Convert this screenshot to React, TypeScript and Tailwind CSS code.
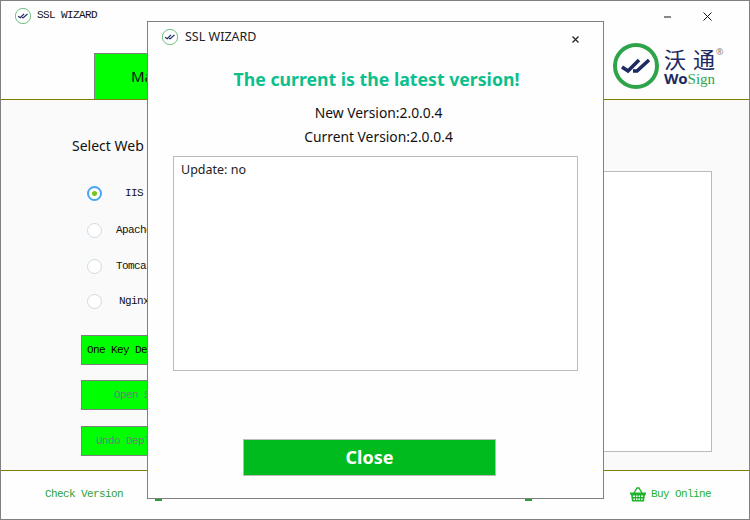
const mono = "font-['Liberation_Mono',monospace] text-[11px] tracking-[-0.6px]"
const sans = "font-['Noto_Sans',sans-serif]"

const RingLogo = ({ size, ring = 4 }: { size: number; ring?: number }) => (
  <svg width={size} height={size} viewBox="0 0 46 46" className="shrink-0">
    <circle cx="23" cy="23" r={23 - ring / 2} fill="#fff" stroke="#2ea44a" strokeWidth={ring} />
    <path d="M9 24l6 4 11-11M20 28h4l12-11" fill="none" stroke="#1d2a63" strokeWidth="3.600" />
  </svg>
)

const Basket = () => (
  <svg width="16" height="16" viewBox="0 0 16 16" className="shrink-0">
    <path d="M4 7l3-5h2l3 5" fill="none" stroke="#1fb42c" strokeWidth="1.4" />
    <path d="M0 6.500h16v2h-1l-1 7H2l-1-7H0z" fill="#1fb42c" />
    <path d="M3 9.500h2v1.500H3zM6 9.500h1.500v1.500H6zM8.500 9.500H10v1.500H8.500zM11 9.500h2v1.500h-2zM3.500 12.500H5V14H3.500zM6 12.500h1.500V14H6zM8.500 12.500H10V14H8.500zM11 12.500h1.500V14H11z" fill="#fff" />
  </svg>
)

const radios = [
  { label: 'IIS', checked: true, mt: 'mt-0' },
  { label: 'Apache', checked: false, mt: 'mt-[22px]' },
  { label: 'Tomcat', checked: false, mt: 'mt-[21px]' },
  { label: 'Nginx', checked: false, mt: 'mt-[20px]' },
]

const buttons = [
  { label: 'One Key Deployment', color: 'text-black', mt: 'mt-0' },
  { label: 'Open Site', color: 'text-[#777777]', mt: 'mt-[15px]' },
  { label: 'Undo Deployment', color: 'text-[#777777]', mt: 'mt-[16px]' },
]

const UpdateDialog = () => (
  <div className={`absolute left-[146px] top-[20px] w-[457px] h-[478px] border border-[#808080] bg-[#fefefe] flex flex-col ${sans}`}>
    <div className="flex items-center h-[29px] pl-[14px] pr-[24px]">
      <RingLogo size={16} ring={2} />
      <span className="ml-[7px] mt-[2px] text-[12.5px] text-[#222]">SSL WIZARD</span>
      <svg width="7" height="7" viewBox="0 0 7 7" className="ml-auto mt-[5px]">
        <path d="M0.500 0.500l6 6M6.500 0.500l-6 6" stroke="#222" strokeWidth="1.200" />
      </svg>
    </div>
    <h1 className="mt-[15px] pl-[2px] text-center text-[17.7px] leading-[26px] font-bold text-[#0dbf8c]">
      The current is the latest version!
    </h1>
    <p className="mt-[9px] pl-[6px] text-center text-[13.85px] leading-[24px] text-[#111]">New Version:2.0.0.4</p>
    <p className="pl-[6px] text-center text-[13.85px] leading-[24px] text-[#111]">Current Version:2.0.0.4</p>
    <div className="mt-[7px] mx-[25px] h-[215px] border border-[#bbbbbb] bg-white px-[7px] pt-[4px] text-[12.5px] leading-[18px] text-[#222]">
      Update: no
    </div>
    <button className="mt-[68px] ml-[95px] w-[253px] h-[37px] border border-[#bbbbbb] bg-[#00bb1e] text-white text-[18px] font-bold">
      Close
    </button>
  </div>
)

export default function App() {
  return (
    <div className="relative w-[750px] h-[520px] overflow-hidden border border-[#808080] bg-[#fefefe] flex flex-col">
      <div className="h-[98px] shrink-0 flex flex-col">
        <div className="flex items-center h-[29px] pl-[14px]">
          <RingLogo size={16} ring={2} />
          <span className={`ml-[6px] ${mono} text-[#111]`}>SSL WIZARD</span>
          <svg width="8" height="2" viewBox="0 0 8 2" className="ml-auto mr-[31px] mt-[2px]">
            <path d="M0 1h7" stroke="#111" strokeWidth="1" />
          </svg>
          <svg width="9" height="9" viewBox="0 0 9 9" className="mr-[37px] mt-[2px]">
            <path d="M0.500 0.500l8 8M8.500 0.500l-8 8" stroke="#111" strokeWidth="1" />
          </svg>
        </div>
        <div className="flex-1 flex justify-between">
          <div className={`mt-[23px] ml-[93px] w-[130px] border border-b-0 border-[#808080] bg-[#00ff00] pl-[36px] pt-[11px] text-[15px] text-[#111] ${sans}`}>
            Main
          </div>
          <div className="flex mt-[13px] mr-[24px] h-[46px]">
            <RingLogo size={46} />
            <div className="ml-[5px] flex flex-col w-[61px]">
              <div className="flex items-start h-[28px] whitespace-nowrap font-['Noto_Sans_CJK_SC',sans-serif] text-[22px] leading-[26px] text-[#1d2a63]">
                <span className="mt-[2px]">沃</span>
                <span className="ml-[7px] mt-[2px]">通</span>
                <span className={`ml-[1px] mt-[3px] text-[9px] leading-[12px] text-[#888] ${sans}`}>®</span>
              </div>
              <div className="font-['Liberation_Serif',serif] text-[15px] leading-[15px] whitespace-nowrap">
                <span className={`font-bold text-[#1d2a63] ${sans}`}>Wo</span>
                <span className="text-[#2ea44a]">Sign</span>
              </div>
            </div>
          </div>
        </div>
      </div>

      <div className="h-[371px] shrink-0 -mx-px border-t border-l border-[#808000] bg-[#fafafa] flex">
        <div className="w-[239px] shrink-0 pl-[71px]">
          <div className={`mt-[36px] text-[14px] leading-[20px] text-[#111] ${sans} whitespace-nowrap`}>Select Web Server</div>
          <div className="mt-[30px] ml-[15px] flex flex-col">
            {radios.map((r) => (
              <div key={r.label} className={`flex items-center h-[15px] ${r.mt}`}>
                <span className={`size-[15px] rounded-full flex items-center justify-center bg-white ${r.checked ? 'border-2 border-[#4aa5f2]' : 'border border-[#cbdbe6]'}`}>
                  {r.checked && <span className="size-[5px] rounded-full bg-[#78c31f]" />}
                </span>
                <span className={`ml-[13px] w-[38px] text-center ${mono} text-[#111]`}>{r.label}</span>
              </div>
            ))}
          </div>
          <div className="mt-[26px] ml-[9px] flex flex-col">
            {buttons.map((b) => (
              <div key={b.label} className={`${b.mt} w-[120px] h-[30px] flex items-center justify-center border border-[#808080] bg-[#00ff00] whitespace-nowrap ${mono} ${b.color}`}>
                {b.label}
              </div>
            ))}
          </div>
        </div>
        <div className="mt-[71px] ml-[1px] w-[471px] h-[281px] border border-[#bbbbbb] bg-white" />
      </div>

      <div className="flex-1 -mx-px border-t border-[#808000] flex items-center pl-[45px] pb-[2px]">
        <span className={`${mono} text-[#2f9e3a]`}>Check Version</span>
        <span className="ml-[32px] w-[7px] h-[14px] bg-[#2f9e3a]" />
        <span className="ml-[363px] w-[7px] h-[14px] bg-[#2f9e3a]" />
        <span className="ml-[98px] flex items-center gap-[5px]">
          <Basket />
          <span className={`${mono} text-[#1fb42c]`}>Buy Online</span>
        </span>
      </div>

      <UpdateDialog />
    </div>
  )
}
